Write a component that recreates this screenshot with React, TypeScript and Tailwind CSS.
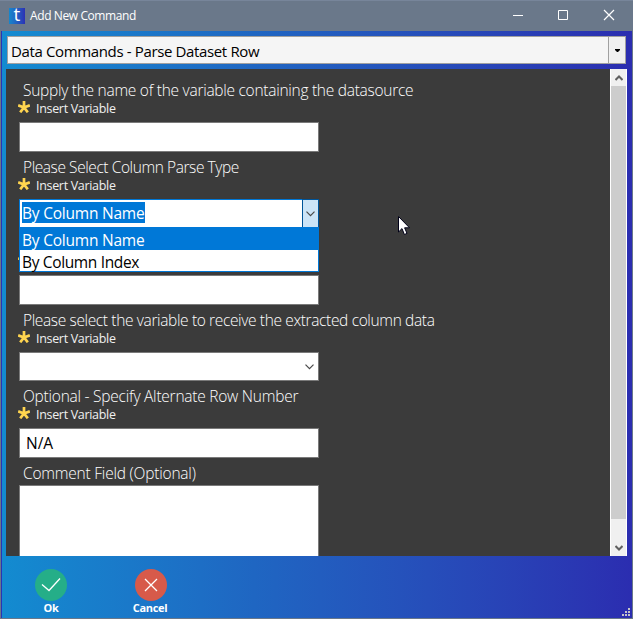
import type { ReactNode } from "react";
import clsx from "clsx";

function Star() {
  return (
    <svg className="block h-3 w-3 shrink-0" viewBox="0 0 12 12" fill="none" stroke="#ffd54f" strokeWidth="2.7">
      <path d="M6 6.4V0M6 6.4L.2 4.3M6 6.4L11.8 4.3M6 6.4L2.2 11.3M6 6.4L9.8 11.3" />
    </svg>
  );
}

function Chevron() {
  return (
    <svg className="block h-[6px] w-[9px]" viewBox="0 0 9 6" fill="none" stroke="#4a4a4a" strokeWidth="1.2">
      <path d="M.5 .7L4.5 4.7L8.5 .7" />
    </svg>
  );
}

type FieldProps = { label?: string; insert?: string | null; track?: string; children: ReactNode };

function Field({ label = "", insert = "Insert Variable", track, children }: FieldProps) {
  return (
    <div className="flex flex-col">
      <div className={clsx("h-5 pl-[17px] text-[15.5px] leading-[21px] font-light whitespace-nowrap text-white", track)}>{label}</div>
      {insert !== null ? (
        <div className="flex h-[22px] items-start gap-1.5 pl-3">
          <div className="pt-px"><Star /></div>
          <span className="text-[12.5px] leading-[17px] tracking-[-0.32px] text-[#f0f0f0]">{insert}</span>
        </div>
      ) : (
        <div className="h-0.5" />
      )}
      <div className="pl-[13px]">{children}</div>
    </div>
  );
}

function TextBox({ value = "" }: { value?: string }) {
  return (
    <div className="h-[30px] w-[300px] border border-[#7a7a7a] bg-white pl-1.5 text-[15.5px] leading-7 text-black">
      {value}
    </div>
  );
}

export default function App() {
  return (
    <div className="flex h-[619px] w-[633px] flex-col overflow-hidden bg-[#6a788a] font-['Open_Sans','Noto_Sans',sans-serif]">
      <header className="flex h-[31px] shrink-0 items-center border-t border-[#77859a] pl-[9px]">
        <div className="flex h-4 w-4 justify-center bg-linear-to-r from-[#1487cc] to-[#2b30b5] text-[19px] leading-[13px] font-medium text-white">t</div>
        <span className="ml-[5px] flex-1 text-[12px] tracking-[-0.4px] text-white">Add New Command</span>
        <svg className="block h-[30px] w-[120px]" viewBox="0 0 120 30" fill="none" stroke="#fff">
          <path d="M0 14.5H10" />
          <path d="M45.5 9.5H54.5V18.5H45.5Z" />
          <path d="M91 9L101 19M101 9L91 19" strokeWidth="1.2" />
        </svg>
      </header>
      <main className="mr-px ml-px flex h-[587px] shrink-0 flex-col border-l border-[#2b35b3] bg-linear-to-r from-[#138bd0] via-[#1f66c2] via-40% to-[#2b2db0] pt-[5px]">
        <div className="ml-[5px] flex h-7 w-[619px] shrink-0 border border-[#a0a0a0] bg-[#f5f5f5]">
          <div className="flex-1 pl-[3px] text-[15px] leading-[28px] tracking-[-0.36px] text-black">Data Commands - Parse Dataset Row</div>
          <div className="flex w-[17px] items-center justify-center border-l border-[#a0a0a0] bg-[#f0f0f0]">
            <svg className="block h-[3px] w-[5px]" viewBox="0 0 5 3"><path d="M0 0H5V1L3 3H2L0 1Z" /></svg>
          </div>
        </div>
        <div className="mt-[5px] ml-1 flex h-[487px] w-[621px] shrink-0 overflow-hidden bg-[#3b3b3b]">
          <div className="flex w-[604px] flex-col gap-[5px] pt-[11px]">
            <Field label="Supply the name of the variable containing the datasource" track="tracking-[-0.27px]"><TextBox /></Field>
            <Field label="Please Select Column Parse Type" track="tracking-[-0.42px]">
              <div className="relative flex h-[29px] w-[300px] border border-[#0078d7] bg-white">
                <div className="flex-1 pt-0.5 pl-0.5">
                  <span className="block h-[21px] w-[123px] bg-[#0078d7] text-[15.5px] leading-[23px] tracking-[-0.22px] whitespace-nowrap text-white">By Column Name</span>
                </div>
                <div className="-my-px -mr-px flex w-[17px] items-center justify-center border border-[#005499] bg-[#cce4f7]"><Chevron /></div>
                <div className="absolute top-[27px] -left-px z-10 h-[45px] w-[300px] border border-[#0078d7] bg-white text-[15.5px]">
                  <div className="h-[22px] bg-[#0078d7] pl-0.5 leading-[25px] tracking-[-0.22px] text-white">By Column Name</div>
                  <div className="h-[21px] pl-0.5 leading-[24px] tracking-[-0.35px] text-black">By Column Index</div>
                </div>
              </div>
            </Field>
            <Field insert=""><TextBox /></Field>
            <Field label="Please select the variable to receive the extracted column data" track="tracking-[-0.36px]">
              <div className="flex h-[29px] w-[300px] items-center justify-end border border-[#7a7a7a] bg-white pr-1"><Chevron /></div>
            </Field>
            <Field label="Optional - Specify Alternate Row Number" track="tracking-[-0.24px]"><TextBox value="N/A" /></Field>
            <Field label="Comment Field (Optional)" insert={null} track="tracking-[-0.21px]">
              <div className="h-[100px] w-[300px] border border-[#7a7a7a] bg-white" />
            </Field>
          </div>
          <div className="flex w-[17px] flex-col items-center border-x border-white bg-[#f0f0f0]">
            <div className="flex h-[17px] w-full shrink-0 items-center justify-center">
              <svg className="block h-[6px] w-[8px]" viewBox="0 0 8 6" fill="none" stroke="#606060" strokeWidth="2"><path d="M.5 5L4 1.5L7.5 5" /></svg>
            </div>
            <div className="h-[433px] w-full shrink-0 bg-[#cdcdcd]" />
            <div className="flex h-[37px] w-full items-end justify-center pb-[5px]">
              <svg className="block h-[6px] w-[8px]" viewBox="0 0 8 6" fill="none" stroke="#606060" strokeWidth="2"><path d="M.5 1L4 4.5L7.5 1" /></svg>
            </div>
          </div>
        </div>
        <footer className="flex flex-1 items-start pt-[13px] pl-[19px]">
          <div className="flex w-[60px] flex-col items-center">
            <svg className="block h-8 w-8" viewBox="0 0 32 32" fill="none" stroke="#fff" strokeWidth="1.3"><circle cx="16" cy="16" r="16" fill="#25ae88" stroke="none" /><path d="M7 15.5L14 21.5L25 9.5" /></svg>
            <span className="text-[11px] leading-[14px] font-bold tracking-[-0.3px] text-white">Ok</span>
          </div>
          <div className="ml-10 flex w-[60px] flex-col items-center">
            <svg className="block h-8 w-8" viewBox="0 0 32 32" fill="none" stroke="#fff" strokeWidth="1.3"><circle cx="16" cy="16" r="16" fill="#d75a4a" stroke="none" /><path d="M10 10L22 22M22 10L10 22" /></svg>
            <span className="pr-0.5 text-[11px] leading-[14px] font-bold tracking-[-0.3px] text-white">Cancel</span>
          </div>
          <svg className="mt-[39px] mr-[2px] ml-auto block h-2 w-2" viewBox="0 0 8 8" fill="#c5c4c8"><path d="M6 0h2v2H6zM3 3h2v2H3zM6 3h2v2H6zM0 6h2v2H0zM3 6h2v2H3zM6 6h2v2H6z" /></svg>
        </footer>
      </main>
      <svg className="fixed top-[216px] left-[398px] block h-[20px] w-[12px]" viewBox="0 0 12 20"><path d="M.5 .5V16L4 12.6L6.4 18.5L9 17.4L6.6 11.8H11.5Z" fill="#fff" stroke="#000018" /></svg>
    </div>
  );
}
